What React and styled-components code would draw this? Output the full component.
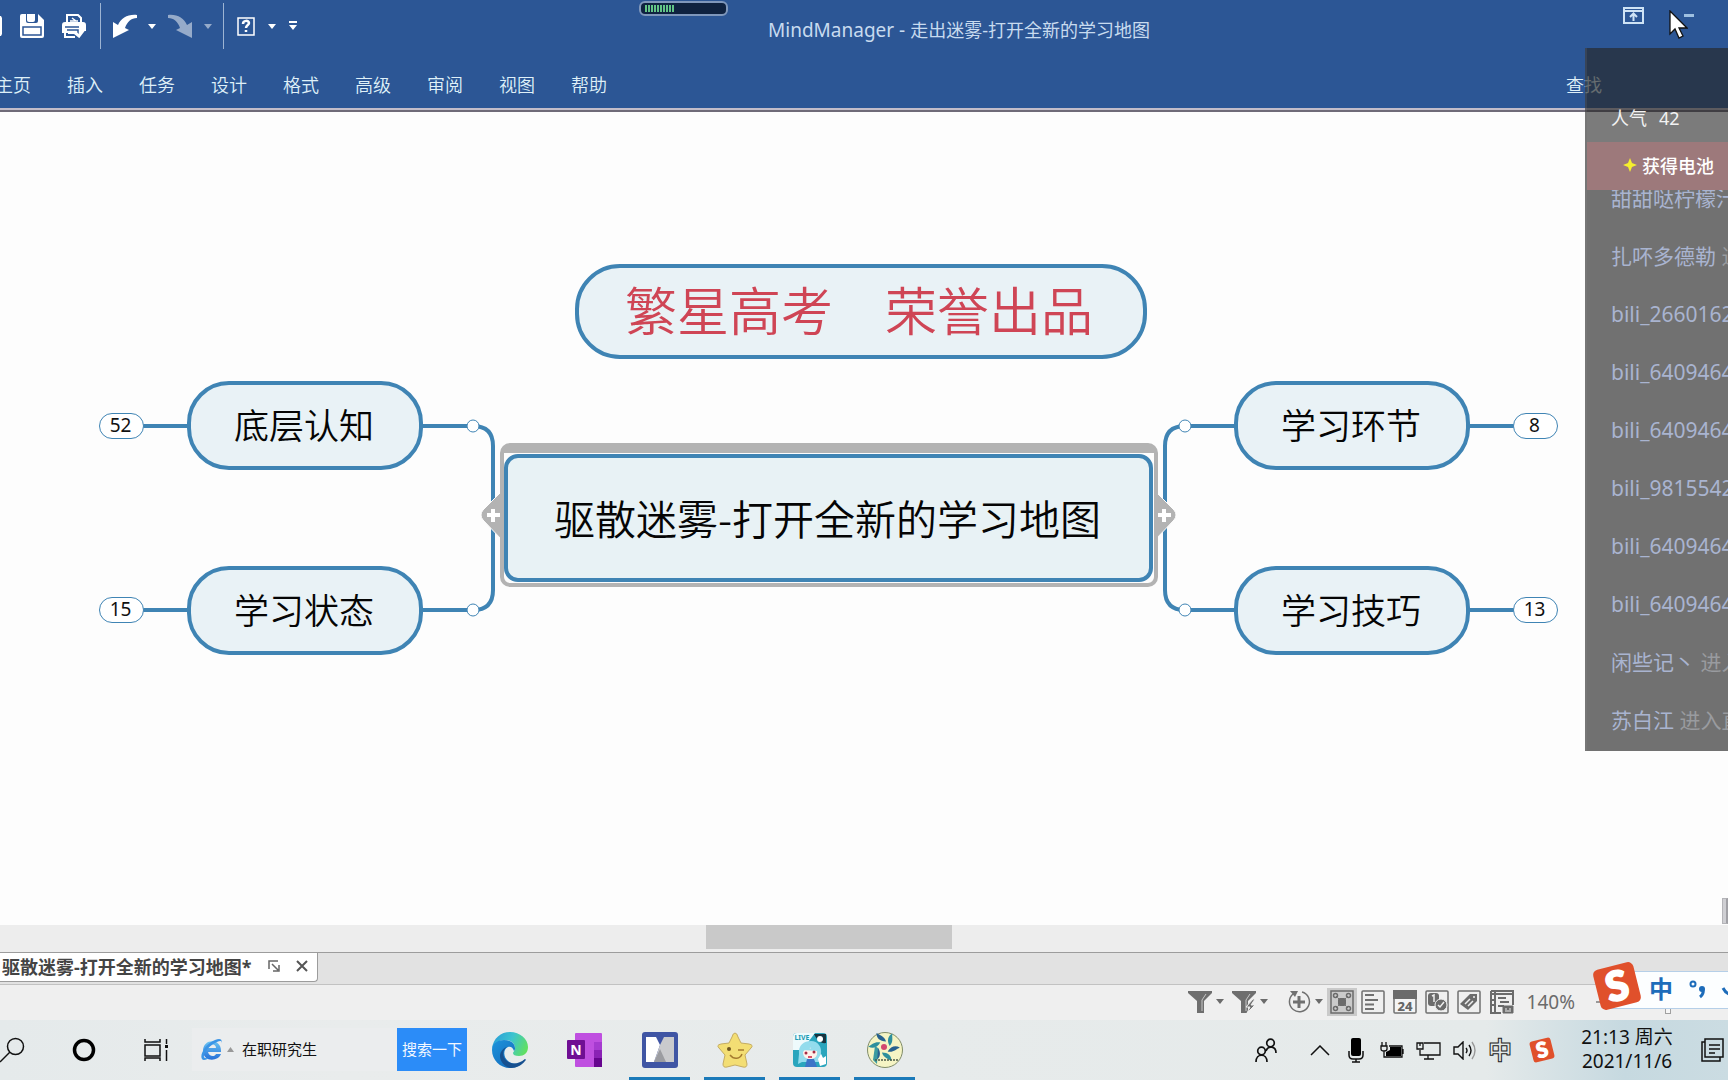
import styled, { createGlobalStyle, css } from "styled-components";

const GlobalStyle = createGlobalStyle`
  * {
    box-sizing: border-box;
  }
  body {
    margin: 0;
    overflow: hidden;
    font-family: "Noto Sans", "Noto Sans CJK SC", sans-serif;
    font-size: 18px;
    font-weight: 400;
  }
  button, input {
    font: inherit;
    color: inherit;
    border: 0;
    padding: 0;
    margin: 0;
    background: none;
  }
  svg {
    display: block;
    flex-shrink: 0;
  }
`;

const BLUE = "#3f84b4";

const Window = styled.div`
  position: relative;
  display: flex;
  flex-direction: column;
  min-height: 100vh;
  overflow: hidden;
  background: #fdfdfd;
`;

/* ---------- ribbon ---------- */

const Ribbon = styled.header`
  background: #2c5695;
  color: #dce9f5;
  border-bottom: 2px solid #6f6b78;
  box-shadow: inset 0 -2px 0 #c3bdc9;
  padding-bottom: 2px;
`;

const TitleBar = styled.div`
  display: flex;
  align-items: flex-start;
  height: 62px;
`;

const QuickTools = styled.div`
  display: flex;
  align-items: center;
  height: 52px;
`;

const ToolButton = styled.button`
  display: flex;
  align-items: center;
  justify-content: ${(p) => p.$align || "center"};
  width: ${(p) => p.$w}px;
  height: 28px;
  color: #fff;
  opacity: ${(p) => (p.$dim ? 0.5 : 1)};
`;

const Divider = styled.span`
  width: 1px;
  height: 46px;
  background: #9db4d3;
`;

const Title = styled.h1`
  flex: 1;
  margin: 0;
  padding-right: 8px;
  font-size: 18px;
  font-weight: 400;
  line-height: 60px;
  text-align: center;
  color: #c8dbef;
  white-space: nowrap;
`;

const AppName = styled.span`
  font-size: 19px;
`;

const WindowControls = styled.div`
  display: flex;
  gap: 40px;
  width: 112px;
  padding: 7px 0 0 7px;
`;

const Menu = styled.nav`
  display: flex;
  height: 46px;
  line-height: 46px;
  margin-left: -23px;
  font-weight: 350;
`;

const MenuLink = styled.a`
  width: 72px;
  text-align: center;
  color: #dff0f8;
  text-decoration: none;
`;

const FindLink = styled(MenuLink)`
  margin-left: auto;
  margin-right: 108px;
`;

const Meter = styled.div`
  position: absolute;
  top: 1px;
  left: 639px;
  width: 89px;
  height: 15px;
  padding: 2px 4px;
  border: 2px solid #7f97bb;
  border-radius: 6px;
  background: #0f2240;
`;

const MeterLevel = styled.div`
  width: 29px;
  height: 100%;
  background: repeating-linear-gradient(90deg, #62c487 0 2px, #0f2240 2px 3px);
`;

const Cursor = styled.svg`
  position: absolute;
  top: 10px;
  right: 40px;
`;

/* ---------- map ---------- */

const Canvas = styled.main`
  position: relative;
  flex: 1;
`;

const placed = css`
  position: absolute;
  left: calc(50% + ${(p) => p.$x}px);
  top: ${(p) => p.$y}px;
`;

const Links = styled.svg`
  ${placed}
`;

const Topic = styled.div`
  ${placed}
  display: flex;
  align-items: center;
  justify-content: center;
  width: 236px;
  height: 89px;
  padding: 0 2px 4px 0;
  border: 4px solid ${BLUE};
  border-radius: 42px;
  background: #e9f2f6;
  color: #050505;
  font-size: 35px;
  font-weight: 350;
  white-space: nowrap;
`;

const Banner = styled(Topic)`
  width: 572px;
  height: 95px;
  padding: 0 4px 6px 0;
  border-radius: 45px;
  color: #cf4555;
  font-family: KaiTi, STKaiti, "Noto Sans CJK SC", sans-serif;
  font-size: 52px;
`;

const Selection = styled.div`
  ${placed}
  width: 658px;
  height: 144px;
  padding: 1px 1px 0 0;
  border: 4px solid #b3b3b3;
  border-top-width: 10px;
  border-radius: 10px;
  background: #fdfdfd;
`;

const CentralTopic = styled.div`
  display: flex;
  align-items: center;
  justify-content: center;
  height: 128px;
  padding: 0 2px 2px 0;
  border: 4px solid ${BLUE};
  border-radius: 14px;
  background: #e8f2f5;
  color: #050505;
  font-family: "Noto Sans CJK SC", sans-serif;
  font-size: 41px;
  font-weight: 350;
  white-space: nowrap;
`;

const Count = styled.button`
  ${placed}
  width: 45px;
  height: 26px;
  padding: 0 2px 2px 0;
  border: 1px solid ${BLUE};
  border-radius: 13px;
  background: #fff;
  color: #111;
  font-size: 19px;
  line-height: 22px;
`;

const PaneToggle = styled.button`
  position: absolute;
  right: 0;
  bottom: 1px;
  width: 6px;
  height: 26px;
  border: 1px solid #b4b4b8;
  border-right: 2px solid #a0a0a5;
  background: #cfcfd3;
`;

/* ---------- bottom bars ---------- */

const ScrollTrack = styled.div`
  display: flex;
  height: 28px;
  padding-left: 706px;
  background: #ededed;
  border-bottom: 1px solid #9c9c9c;
`;

const ScrollThumb = styled.div`
  width: 246px;
  height: 24px;
  background: #c9c9c9;
`;

const TabStrip = styled.div`
  display: flex;
  align-items: flex-start;
  height: 32px;
  background: #e2e2e2;
  border-bottom: 1px solid #c2c2c2;
`;

const DocTab = styled.div`
  display: flex;
  align-items: center;
  gap: 16px;
  width: 318px;
  height: 29px;
  padding: 0 0 2px 2px;
  background: #fff;
  border-right: 1px solid #9c9c9c;
  border-bottom: 1px solid #9c9c9c;
  border-radius: 0 0 4px 0;
  color: #444;
  font-weight: 700;
  white-space: nowrap;
`;

const StatusBar = styled.div`
  display: flex;
  align-items: center;
  justify-content: flex-end;
  gap: 8px;
  height: 35px;
  padding-bottom: 2px;
  background: #efefef;
  color: #6b6b6b;
`;

const StatusButton = styled.button`
  display: flex;
  align-items: center;
  justify-content: center;
  gap: 4px;
  width: ${(p) => p.$w || 24}px;
  height: 28px;
`;

const ViewButtons = styled.div`
  display: flex;
  gap: 8px;
  margin-left: -4px;
`;

const ActiveView = styled(StatusButton)`
  width: 30px;
  margin-right: -4px;
  background: #cacaca;
`;

const ZoomValue = styled.span`
  width: 52px;
  font-size: 19px;
  text-align: right;
`;

const ZoomOut = styled.button`
  width: 12px;
  margin-left: 13px;
`;

const ZoomSlider = styled.input`
  appearance: none;
  width: 112px;
  height: 24px;
  &::-webkit-slider-runnable-track {
    height: 24px;
    background: linear-gradient(#aaa, #aaa) center / 100% 1px no-repeat;
  }
  &::-webkit-slider-thumb {
    appearance: none;
    width: 6px;
    height: 24px;
    border: 1px solid #a0a0a0;
    background: #f6f6f6;
  }
`;

/* ---------- taskbar ---------- */

const Taskbar = styled.footer`
  display: flex;
  align-items: center;
  height: 60px;
  background: linear-gradient(90deg, #e5eaeb 0, #e9ecec 20%, #e5eaea 86%, #c6d9e0 94%, #cbdce2);
  color: #111;
`;

const TaskButton = styled.button`
  display: flex;
  align-items: center;
  justify-content: ${(p) => p.$align || "center"};
  width: ${(p) => p.$w || 72}px;
  height: 60px;
`;

const SearchBox = styled.form`
  display: flex;
  align-items: center;
  height: 43px;
  padding-left: 8px;
  margin: 0 5px 2px 0;
  background: #ebedee;
  font-size: 15px;
`;

const SearchInput = styled.input`
  width: 155px;
  height: 43px;
  padding-bottom: 2px;
  margin-left: 8px;
  outline: 0;
`;

const SearchSubmit = styled.button`
  width: 70px;
  height: 43px;
  padding-bottom: 2px;
  background: #2b8cf8;
  color: #f2f8ff;
`;

const AppButton = styled.button`
  display: flex;
  align-items: center;
  justify-content: center;
  width: 75px;
  height: 60px;
  background: ${(p) => (p.$open ? "linear-gradient(#1b7ab9, #1b7ab9) bottom / 61px 3px no-repeat" : "none")};
`;

const Tray = styled.div`
  display: flex;
  align-items: center;
  margin-left: auto;
`;

const Gap = styled.span`
  width: ${(p) => p.$w}px;
`;

const TrayMode = styled.span`
  color: transparent;
  font-size: 24px;
  font-weight: 700;
  line-height: 36px;
  -webkit-text-stroke: 1px #222;
`;

const Clock = styled.time`
  width: 146px;
  padding-bottom: 2px;
  font-size: 19px;
  line-height: 24px;
  text-align: center;
`;

/* ---------- floating panels ---------- */

const LivePanel = styled.aside`
  position: absolute;
  top: 48px;
  right: 0;
  width: 143px;
  height: 703px;
  display: flex;
  flex-direction: column;
  overflow: hidden;
  border-left: 2px solid rgba(150, 150, 150, 0.15);
  background: rgba(38, 38, 38, 0.65);
  white-space: nowrap;
`;

const Popularity = styled.div`
  display: flex;
  align-items: flex-end;
  gap: 12px;
  height: 94px;
  padding: 0 0 12px 24px;
  background: linear-gradient(rgba(255, 255, 255, 0.07), rgba(255, 255, 255, 0.07)) bottom / 100% 30px no-repeat;
  color: #f2f2f2;
`;

const GiftRow = styled.div`
  display: flex;
  align-items: center;
  gap: 5px;
  height: 48px;
  padding: 0 0 2px 36px;
  background: rgba(225, 135, 140, 0.4);
  color: #fff;
  font-weight: 500;
`;

const Feed = styled.ul`
  flex: 1;
  margin: 0;
  padding: 0 0 2px 24px;
  overflow: hidden;
  list-style: none;
  display: flex;
  flex-direction: column;
  justify-content: flex-end;
`;

const FeedItem = styled.li`
  height: 58px;
  flex-shrink: 0;
  line-height: 58px;
  color: #a9b4d0;
  font-size: 21px;
`;

const Muted = styled.span`
  color: #999b9f;
`;

const ImeBar = styled.div`
  position: absolute;
  right: 0;
  bottom: 71px;
  display: flex;
  align-items: center;
  gap: 16px;
  width: 118px;
  height: 38px;
  padding: 0 0 2px 38px;
  border: 1px solid #b5cfe8;
  border-right: 0;
  background: #fcfeff;
  color: #1d6cba;
  font-size: 24px;
  font-weight: 700;
  line-height: 34px;
  white-space: nowrap;
`;

const ImeLogo = styled.span`
  position: absolute;
  left: -19px;
  bottom: -3px;
`;

const Caret = () => (
  <svg width="8" height="5" viewBox="0 0 8 5">
    <path d="M0 0h8L4 5z" fill="currentColor" />
  </svg>
);

const SaveIcon = () => (
  <svg width="24" height="24" viewBox="0 0 24 24">
    <path d="M2 0h16l6 6v16a2 2 0 0 1-2 2H2a2 2 0 0 1-2-2V2a2 2 0 0 1 2-2z" fill="#fff" />
    <path d="M6 0h12v7a2 2 0 0 1-2 2H8a2 2 0 0 1-2-2z" fill="#2c5695" />
    <path d="M7 0h8v6a2 2 0 0 1-2 2H9a2 2 0 0 1-2-2z" fill="#fff" />
    <path d="M3 13h18v8H3z" fill="none" stroke="#2c5695" strokeWidth="1.500" />
  </svg>
);

const PrintIcon = () => (
  <svg width="24" height="24" viewBox="0 0 24 24" fill="none">
    <path d="M5 8V1h11l3 3v4" stroke="#fff" strokeWidth="2" />
    <path d="M10 4l4 3M8 7h8" stroke="#fff" strokeWidth="1.500" />
    <path d="M3 8h18a3 3 0 0 1 3 3v6h-4l-2 2H0v-8a3 3 0 0 1 3-3z" fill="#fff" />
    <path d="M3 13h14M5 16h11v3" stroke="#2c5695" strokeWidth="1.500" />
    <path d="M3 18v5h10M6 19h6" stroke="#fff" strokeWidth="2" />
    <path d="M12 18l5 4 6-8" stroke="#fff" strokeWidth="3" />
  </svg>
);

const UndoIcon = () => (
  <svg width="24" height="24" viewBox="0 0 24 24">
    <path d="M0 24V8l5 3C8 4 15 0 24 1v3c-6 0-10 4-12 10l4 2z" fill="#fff" />
  </svg>
);

const RedoIcon = () => (
  <svg width="24" height="24" viewBox="0 0 24 24">
    <path d="M24 24V8l-5 3C16 4 9 0 0 1v3c6 0 10 4 12 10l-4 2z" fill="#fff" />
  </svg>
);

const HelpIcon = () => (
  <svg width="18" height="19" viewBox="0 0 18 19" fill="none" stroke="#fff">
    <path d="M1 1h16v17H1z" strokeWidth="1.500" />
    <path d="M6 7c0-4 6-4 6-1 0 2-3 2-3 5M9 13v2" strokeWidth="2.500" />
  </svg>
);

const MoreIcon = () => (
  <svg width="8" height="10" viewBox="0 0 8 10" fill="#fff">
    <path d="M0 0h8v2H0zM0 4h8L4 9z" />
  </svg>
);

const RibbonToggleIcon = () => (
  <svg width="21" height="17" viewBox="0 0 21 17" fill="none" stroke="#cfe3f5" strokeWidth="2">
    <path d="M1 1h19v15H1zM1 4h19M10.500 14V7M7 10l3.500-3.500L14 10" />
  </svg>
);

const FunnelIcon = ({ bolt }) => (
  <svg width="24" height="22" viewBox="0 0 24 22" fill="#6e6e6e">
    <path d="M0 0h24v2l-8 8v12H9V10L0 2z" />
    <path d="M18 3l-4 6v11" stroke="#c8c8c8" fill="none" />
    {bolt && <path d="M21 8l-7 8h4l-3 6 8-8h-4l4-6z" stroke="#efefef" strokeWidth="1" />}
  </svg>
);

const DetailIcon = () => (
  <svg width="24" height="24" viewBox="0 0 24 24" fill="none" stroke="#707070">
    <path d="M6 4a10 10 0 1 0 9-2" strokeWidth="1.500" />
    <path d="M12 6v12M6 12h12" strokeWidth="3" />
    <path d="M3 1h8l-3 6z" fill="#707070" stroke="none" />
  </svg>
);

const MapViewIcon = () => (
  <svg width="24" height="24" viewBox="0 0 24 24" fill="none" stroke="#6b6b6b">
    <rect x="1" y="1" width="22" height="22" strokeWidth="1.500" />
    <path d="M6 6l12 12M18 6L6 18" strokeDasharray="2 1" />
    <rect x="8" y="8" width="8" height="8" rx="2" fill="#6b6b6b" stroke="none" />
    <g strokeWidth="1.500">
      <circle cx="5.500" cy="5.500" r="2" />
      <circle cx="18.500" cy="5.500" r="2" />
      <circle cx="5.500" cy="18.500" r="2" />
      <circle cx="18.500" cy="18.500" r="2" />
    </g>
  </svg>
);

const OutlineIcon = () => (
  <svg width="24" height="24" viewBox="0 0 24 24" fill="none" stroke="#707070">
    <rect x="1" y="1" width="22" height="22" rx="1" strokeWidth="1.500" />
    <path d="M4 5h9M4 10h13M4 14.500h9M4 19h9" strokeWidth="2" />
  </svg>
);

const CalendarIcon = () => (
  <svg width="24" height="24" viewBox="0 0 24 24">
    <rect x="1" y="1" width="22" height="22" rx="1" fill="#f4f4f4" stroke="#707070" strokeWidth="1.500" />
    <path d="M0 0h24v9H0z" fill="#6b6b6b" />
    <text x="12" y="21" fontSize="13" fontWeight="800" textAnchor="middle" fill="#666">24</text>
  </svg>
);

const IconsViewIcon = () => (
  <svg width="24" height="24" viewBox="0 0 24 24" fill="none">
    <rect x="1" y="1" width="22" height="22" rx="1" stroke="#707070" strokeWidth="1.500" />
    <rect x="3" y="3" width="11" height="13" rx="3" fill="#6b6b6b" />
    <path d="M7 6l2-1v7" stroke="#eee" strokeWidth="1.500" />
    <circle cx="16" cy="15" r="6" fill="#6b6b6b" stroke="#efefef" />
    <path d="M13 15l2 2 4-5" stroke="#eee" strokeWidth="1.500" />
  </svg>
);

const TagIcon = () => (
  <svg width="24" height="24" viewBox="0 0 24 24" fill="none">
    <rect x="1" y="1" width="22" height="22" rx="1" stroke="#707070" strokeWidth="1.500" />
    <path d="M3 14L13 4h7v7l-9 9z" fill="#6b6b6b" />
    <path d="M8 14l5-5M11 16l5-5" stroke="#eee" strokeWidth="1.500" />
    <circle cx="17" cy="7" r="1" fill="#eee" />
  </svg>
);

const GanttIcon = () => (
  <svg width="24" height="24" viewBox="0 0 24 24" fill="none" stroke="#6b6b6b">
    <path d="M1 1h22v14M1 1v22h10M5 1v22" strokeWidth="2" />
    <path d="M1 4h22M8 8h8M10 12h9M8 16h6M1 10h4M1 15h4" strokeWidth="2" />
    <path d="M13 16h10v7H13z" fill="#6b6b6b" />
    <path d="M15 19h2M19 19h2M15 21h6" stroke="#eee" />
  </svg>
);

const SogouLogo = ({ size }) => (
  <svg width={size} height={size} viewBox="0 0 46 46" overflow="visible">
    <g transform="rotate(-14 23 23)">
      <rect x="4" y="4" width="38" height="38" rx="5" fill="#e0502b" />
      <text x="23" y="36" fontSize="37" fontWeight="900" fontFamily="Lato" textAnchor="middle" fill="#fff" stroke="#fff" strokeWidth="2">S</text>
    </g>
  </svg>
);

const EdgeIcon = () => (
  <svg width="36" height="36" viewBox="0 0 36 36">
    <defs>
      <linearGradient id="edgeTop" x1="0" y1="0.300" x2="1" y2="0.600">
        <stop offset="0" stopColor="#2a9fd8" />
        <stop offset="0.500" stopColor="#3cc4cf" />
        <stop offset="1" stopColor="#62e060" />
      </linearGradient>
      <linearGradient id="edgeLow" x1="0" y1="0" x2="1" y2="1">
        <stop offset="0" stopColor="#1d93dc" />
        <stop offset="1" stopColor="#1263b4" />
      </linearGradient>
    </defs>
    <path d="M0 17C1 6 9 0 18 0c10 0 18 7 18 15 0 6-4 9-9 9-4 0-6-1-6-3 0-1 2-2 2-5 0-5-5-8-10-8C7 8 2 11 0 17z" fill="url(#edgeTop)" />
    <path d="M0 18C0 11 6 8 12 8c6 0 11 3 11 8 0 1 0 2-1 3-1-4-4-5-6-4-5 2-5 10 0 14 5 4 12 4 17-2-3 6-9 9-15 9C8 36 0 28 0 18z" fill="url(#edgeLow)" />
    <path d="M15 15c-5 3-5 10 0 14 5 4 12 3 18-2 1 0 1 1 0 2-3 4-8 7-14 7-6-1-11-6-11-12 0-4 3-8 7-9z" fill="#17508f" />
  </svg>
);

const OneNoteIcon = () => (
  <svg width="36" height="34" viewBox="0 0 36 34">
    <rect x="8" y="0" width="27" height="34" rx="1" fill="#bf4fe0" />
    <path d="M27 9h8v8h-8z" fill="#a63bd0" />
    <path d="M27 17h8v8h-8z" fill="#8a22b5" />
    <path d="M27 25h8v9h-8z" fill="#66058e" />
    <rect x="0" y="7" width="18" height="19" rx="1" fill="#6f0f93" />
    <text x="9" y="22" fontSize="14" fontWeight="700" textAnchor="middle" fill="#fff">N</text>
  </svg>
);

const MindManagerIcon = () => (
  <svg width="36" height="36" viewBox="0 0 36 36">
    <rect width="36" height="36" rx="3" fill="#3f55a4" />
    <path d="M4 5h10l4 8-6 17H4z" fill="#fff" />
    <path d="M32 5H22l-4 8-6 17h20z" fill="#c9cacd" />
    <path d="M18 17l-6 13h12z" fill="#9b9ca1" />
  </svg>
);

const StarIcon = () => (
  <svg width="36" height="36" viewBox="0 0 36 36">
    <path d="M18 1q2 0 3 4l3 6 8 1q5 1 2 4l-6 7 2 9q0 4-4 3l-8-2-8 2q-4 1-4-3l2-9-6-7q-3-3 2-4l8-1 3-6q1-4 3-4z" fill="#f3de74" stroke="#c4ac62" strokeLinejoin="round" />
    <circle cx="12" cy="17" r="2" fill="#6e5520" />
    <path d="M21 18h6M13 23c4 5 10 4 12-1" fill="none" stroke="#a57b30" strokeWidth="1.500" />
  </svg>
);

const LiveIcon = () => (
  <svg width="36" height="36" viewBox="0 0 36 36">
    <rect x="1" y="1" width="34" height="34" rx="4" fill="#2aa5bd" />
    <path d="M1 5a4 4 0 0 1 4-4h18l-6 8-3 9H1z" fill="#eefafc" />
    <path d="M22 2h12v9c-5 1-9-3-12-9z" fill="#17343f" />
    <circle cx="28" cy="7" r="3" fill="#fff" />
    <path d="M7 22C6 13 12 9 19 9s11 6 10 13l3 7-6 1H10l-4 2z" fill="#93dced" />
    <path d="M11 20c3-5 11-6 14-1 1 6-3 8-7 8s-7-2-7-7z" fill="#fff0ea" />
    <path d="M10 18l7-6 1 5 3-4 5 6" fill="#93dced" />
    <circle cx="14" cy="21" r="1.500" fill="#a52c45" />
    <circle cx="22" cy="20" r="1.500" fill="#a52c45" />
    <path d="M13 35l2-8h7l3 8z" fill="#3c74c8" />
    <path d="M26 27l3-5 2 4 3-2v8l-6 2z" fill="#fff" />
    <path d="M16 24h4v2h-4z" fill="#d95168" />
    <text x="10" y="8" fontSize="7" fontWeight="700" textAnchor="middle" fill="#1c9cb5">LIVE</text>
  </svg>
);

const PinwheelIcon = () => (
  <svg width="36" height="36" viewBox="0 0 36 36">
    <circle cx="18" cy="18" r="17.500" fill="#f5f4c4" stroke="#7f8b68" />
    {[-10, 50, 110, 170, 230, 290].map((a, i) => (
      <path key={a} d="M20 10C14 9 11 5 12 0c3 3 7 4 8 10z" fill={i % 2 ? "#2d8f9d" : "#27618f"} transform={`rotate(${a} 17 15)`} />
    ))}
    <path d="M8 14l-2 14 4 4 1-16z" fill="#3a9aa0" />
    <circle cx="17" cy="15" r="3" fill="#d3476f" />
    <path d="M8 28h24" stroke="#4c5b48" strokeWidth="1.500" strokeDasharray="2 1" />
  </svg>
);

const IeIcon = () => (
  <svg width="24" height="24" viewBox="0 0 24 24">
    <defs>
      <linearGradient id="ie" x1="0" y1="0" x2="0" y2="1">
        <stop offset="0" stopColor="#6ac4f2" />
        <stop offset="1" stopColor="#256fd8" />
      </linearGradient>
    </defs>
    <path d="M21 15H8c1 5 7 5 8 2h5c-3 8-18 8-18-3C3 1 22 1 21 15zM8 11h8c0-5-8-5-8 0z" fill="url(#ie)" fillRule="evenodd" />
    <path d="M2 22C-1 17 7 6 15 3c5-2 8-1 6 4 1-3 0-4-4-2C10 8 3 16 4 20c1 2 4 1 6 0-3 3-7 4-8 2z" fill="#3b95e6" />
  </svg>
);

const counts = [
  { n: 52, x: -765, y: 301 },
  { n: 15, x: -765, y: 485 },
  { n: 8, x: 649, y: 301 },
  { n: 13, x: 649, y: 485 },
];

const topics = [
  { text: "底层认知", x: -677, y: 269 },
  { text: "学习状态", x: -677, y: 454 },
  { text: "学习环节", x: 370, y: 269 },
  { text: "学习技巧", x: 370, y: 454 },
];

const menus = ["主页", "插入", "任务", "设计", "格式", "高级", "审阅", "视图", "帮助"];

const feed = [
  { name: "甜甜哒柠檬汁" },
  { name: "扎吥多德勒", note: "进入直播间" },
  { name: "bili_26601621" },
  { name: "bili_64094641" },
  { name: "bili_64094641" },
  { name: "bili_98155421" },
  { name: "bili_64094641" },
  { name: "bili_64094641" },
  { name: "闲些记丶", note: "进入直播间" },
  { name: "苏白江", note: "进入直播间" },
];

const MindMap = () => (
  <Canvas>
    {/* branches and collapse dots */}
    <Links $x={-764} $y={300} width="1460" height="220" viewBox="0 0 1460 220" fill="none">
      <g stroke={BLUE} strokeWidth="4">
        <path d="M40 14H373Q393 14 393 34V178Q393 198 373 198H40" />
        <path d="M1420 14H1085Q1065 14 1065 34V178Q1065 198 1085 198H1420" />
      </g>
      <g stroke={BLUE} fill="#fff">
        <circle cx="373" cy="14" r="6" />
        <circle cx="373" cy="198" r="6" />
        <circle cx="1085" cy="14" r="6" />
        <circle cx="1085" cy="198" r="6" />
      </g>
      <g fill="#b3b3b3" stroke="#fdfdfd">
        <path d="M402 79L383 98q-4 5 0 10l19 20z" />
        <path d="M1055 79l19 19q4 5 0 10l-19 20z" />
      </g>
      <path d="M393 97v13M387 103h13M1064 97v13M1058 103h13" stroke="#fff" strokeWidth="4" />
    </Links>
    <Banner $x={-289} $y={152}>繁星高考　荣誉出品</Banner>
    {topics.map((t) => (
      <Topic key={t.text} $x={t.x} $y={t.y}>{t.text}</Topic>
    ))}
    {counts.map((c) => (
      <Count key={c.n} $x={c.x} $y={c.y}>{c.n}</Count>
    ))}
    <Selection $x={-364} $y={331}>
      <CentralTopic>驱散迷雾-打开全新的学习地图</CentralTopic>
    </Selection>
    <PaneToggle aria-label="任务窗格" />
  </Canvas>
);

const App = () => {
  return (
    <Window>
      <GlobalStyle />
      <Ribbon>
        <TitleBar>
          <QuickTools>
            <ToolButton $w={12} $align="flex-start" aria-label="打开">
              <svg width="2" height="20"><path d="M0 0h1l1 2v16l-1 2H0z" fill="#fff" /></svg>
            </ToolButton>
            <ToolButton $w={40} aria-label="保存"><SaveIcon /></ToolButton>
            <ToolButton $w={44} aria-label="打印"><PrintIcon /></ToolButton>
            <Gap $w={4} />
            <Divider />
            <ToolButton $w={47} aria-label="撤消"><UndoIcon /></ToolButton>
            <ToolButton $w={8} aria-label="撤消列表"><Caret /></ToolButton>
            <ToolButton $w={48} $dim aria-label="重做"><RedoIcon /></ToolButton>
            <ToolButton $w={8} $dim aria-label="重做列表"><Caret /></ToolButton>
            <Gap $w={11} />
            <Divider />
            <ToolButton $w={44} aria-label="帮助"><HelpIcon /></ToolButton>
            <ToolButton $w={8} aria-label="帮助列表"><Caret /></ToolButton>
            <ToolButton $w={34} aria-label="自定义"><MoreIcon /></ToolButton>
          </QuickTools>
          <Title><AppName>MindManager - </AppName>走出迷雾-打开全新的学习地图</Title>
          <WindowControls>
            <button aria-label="功能区"><RibbonToggleIcon /></button>
            <button aria-label="最小化">
              <svg width="12" height="3"><path d="M0 0h10v3H0z" fill="#9fc0e0" /></svg>
            </button>
          </WindowControls>
        </TitleBar>
        <Menu>
          {menus.map((m) => (
            <MenuLink key={m} href="#">{m}</MenuLink>
          ))}
          <FindLink href="#">查找</FindLink>
        </Menu>
      </Ribbon>

      <MindMap />

      <ScrollTrack>
        <ScrollThumb />
      </ScrollTrack>
      <TabStrip>
        <DocTab>
          驱散迷雾-打开全新的学习地图*
          <svg width="12" height="12" viewBox="0 0 12 12" fill="none" stroke="#666" strokeWidth="1.500">
            <path d="M1 9V1h9M4 4l6 6M11 5v6H5" />
          </svg>
          <button aria-label="关闭">
            <svg width="12" height="12" viewBox="0 0 12 12" stroke="#555" strokeWidth="2">
              <path d="M1 1l10 10M11 1L1 11" />
            </svg>
          </button>
        </DocTab>
      </TabStrip>
      <StatusBar>
        <StatusButton $w={36} aria-label="筛选"><FunnelIcon /><Caret /></StatusButton>
        <StatusButton $w={36} aria-label="快速筛选"><FunnelIcon bolt /><Caret /></StatusButton>
        <Gap $w={3} />
        <StatusButton $w={36} aria-label="详细级别"><DetailIcon /><Caret /></StatusButton>
        <ViewButtons>
          <ActiveView aria-label="导图视图"><MapViewIcon /></ActiveView>
          <StatusButton aria-label="大纲视图"><OutlineIcon /></StatusButton>
          <StatusButton aria-label="日程视图"><CalendarIcon /></StatusButton>
          <StatusButton aria-label="图标视图"><IconsViewIcon /></StatusButton>
          <StatusButton aria-label="标签视图"><TagIcon /></StatusButton>
          <StatusButton $w={26} aria-label="甘特图"><GanttIcon /></StatusButton>
        </ViewButtons>
        <ZoomValue>140%</ZoomValue>
        <ZoomOut aria-label="缩小">
          <svg width="10" height="2"><path d="M0 0h10v2H0z" fill="#999" /></svg>
        </ZoomOut>
        <ZoomSlider type="range" aria-label="缩放" defaultValue="46" />
      </StatusBar>

      <Taskbar>
        <TaskButton $w={48} $align="flex-start" aria-label="搜索">
          <svg width="25" height="26" viewBox="0 0 25 26" fill="none" stroke="#111" strokeWidth="1.500">
            <circle cx="15.500" cy="9.500" r="8" />
            <path d="M10 15L0 25" />
          </svg>
        </TaskButton>
        <TaskButton aria-label="Cortana">
          <svg width="24" height="24"><circle cx="12" cy="12" r="9.500" fill="none" stroke="#000" strokeWidth="3.500" /></svg>
        </TaskButton>
        <TaskButton aria-label="任务视图">
          <svg width="24" height="24" viewBox="0 0 24 24" fill="none" stroke="#111" strokeWidth="1.500">
            <path d="M1 1v3h15V1M1 7h15v11H1zM1 23v-3h15v3M22.500 1v5M22.500 12v11" />
            <path d="M21 7h3v3h-3z" fill="#111" stroke="none" />
          </svg>
        </TaskButton>
        <SearchBox>
          <IeIcon />
          <svg width="10" height="5"><path d="M3 5l3.500-5L10 5z" fill="#999" /></svg>
          <SearchInput aria-label="搜索内容" defaultValue="在职研究生" />
          <SearchSubmit type="button">搜索一下</SearchSubmit>
        </SearchBox>
        <AppButton aria-label="Edge"><EdgeIcon /></AppButton>
        <AppButton aria-label="OneNote"><OneNoteIcon /></AppButton>
        <AppButton $open aria-label="MindManager"><MindManagerIcon /></AppButton>
        <AppButton $open aria-label="星星"><StarIcon /></AppButton>
        <AppButton $open aria-label="直播姬"><LiveIcon /></AppButton>
        <AppButton $open aria-label="风车"><PinwheelIcon /></AppButton>
        <Tray>
          <TaskButton $w={36} aria-label="人脉">
            <svg width="22" height="25" viewBox="0 0 22 25" fill="none" stroke="#111" strokeWidth="1.700">
              <circle cx="6.500" cy="13" r="3.800" />
              <path d="M1 24c0-9 11-9 11 0" />
              <circle cx="15.500" cy="5" r="3.800" />
              <path d="M11 13c2-6 10-5 10 2" />
            </svg>
          </TaskButton>
          <Gap $w={18} />
          <TaskButton $w={36} aria-label="显示隐藏的图标">
            <svg width="20" height="11" fill="none" stroke="#111" strokeWidth="1.500"><path d="M1 10l9-9 9 9" /></svg>
          </TaskButton>
          <TaskButton $w={36} aria-label="麦克风">
            <svg width="16" height="25" viewBox="0 0 16 25" fill="none" stroke="#111" strokeWidth="1.500">
              <rect x="3" y="0" width="10" height="18" rx="2" fill="#000" stroke="none" />
              <path d="M1 13v4q0 4 4 4h6q4 0 4-4v-4M8 21v3M4 24h8" />
            </svg>
          </TaskButton>
          <TaskButton $w={36} aria-label="电池">
            <svg width="25" height="17" viewBox="0 0 25 17" fill="none" stroke="#111" strokeWidth="1.300">
              <path d="M2 0v4M6 0v4M1 4h6v3q0 2-3 2t-3-2zM4 9v6h2M9 4h13v11H5M23 7v5" />
              <path d="M10 5h11v9H6v-4l4-2z" fill="#000" stroke="none" />
            </svg>
          </TaskButton>
          <TaskButton $w={36} aria-label="网络">
            <svg width="25" height="19" viewBox="0 0 25 19" fill="none" stroke="#111" strokeWidth="1.300">
              <path d="M8 2h16v12H4V9M1 2h6v6H1zM4 2v3M12 14v4M8 18h10" />
            </svg>
          </TaskButton>
          <TaskButton $w={36} aria-label="音量">
            <svg width="23" height="19" viewBox="0 0 23 19" fill="none" stroke="#111" strokeWidth="1.400">
              <path d="M1 6h4l5-5v17l-5-5H1zM13 7q2 2.500 0 5M16 4q4 5.500 0 11" />
              <path d="M19 1q6 8.500 0 17" stroke="#999" />
            </svg>
          </TaskButton>
          <TaskButton $w={36} aria-label="输入法"><TrayMode>中</TrayMode></TaskButton>
          <Gap $w={12} />
          <TaskButton $w={24} aria-label="搜狗"><SogouLogo size={26} /></TaskButton>
          <Clock>21:13 周六<br />2021/11/6</Clock>
          <TaskButton $w={28} $align="flex-start" aria-label="通知">
            <svg width="25" height="24" viewBox="0 0 25 24" fill="none" stroke="#111" strokeWidth="1.500">
              <path d="M5 1h18v18H5zM5 4H2v19h18v-4M9 7h11M9 11h11M9 15h6" />
            </svg>
          </TaskButton>
        </Tray>
      </Taskbar>

      <Meter><MeterLevel /></Meter>
      <LivePanel>
        <Popularity><span>人气</span><span>42</span></Popularity>
        <GiftRow>
          <svg width="14" height="14" viewBox="0 0 14 14"><path d="M7 0l2 5 5 2-5 2-2 5-2-5-5-2 5-2z" fill="#f5ee2e" /></svg>
          获得电池
        </GiftRow>
        <Feed>
          {feed.map((f, i) => (
            <FeedItem key={i}>{f.name} {f.note && <Muted>{f.note}</Muted>}</FeedItem>
          ))}
        </Feed>
      </LivePanel>
      <Cursor width="19" height="29" viewBox="0 0 19 29">
        <path d="M1 1v23l5-5 4 9 4-2-4-8h8z" fill="#fff" stroke="#111" strokeWidth="1.300" />
      </Cursor>
      <ImeBar>
        <ImeLogo><SogouLogo size={50} /></ImeLogo>
        <span>中</span>
        <svg width="40" height="20" viewBox="0 0 40 20" fill="none" stroke="#1d6cba">
          <circle cx="4" cy="5" r="2.500" strokeWidth="2" />
          <path d="M14 10q1 5-3 8" strokeWidth="3" />
          <circle cx="13" cy="10" r="3" fill="#1d6cba" stroke="none" />
          <path d="M34 9q3 6 9 7" strokeWidth="3" />
        </svg>
      </ImeBar>
    </Window>
  );
};

export default App;
